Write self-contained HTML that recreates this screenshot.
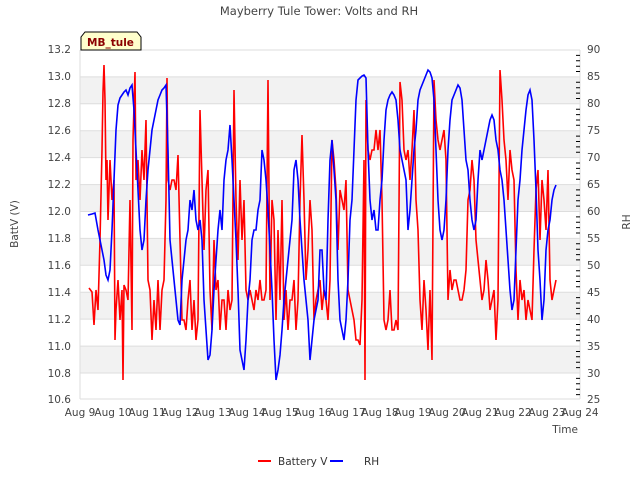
<!DOCTYPE html>
<html><head><meta charset="utf-8"><style>
body{margin:0;background:#fff;}
svg{display:block;font-family:"DejaVu Sans","Liberation Sans",sans-serif;}
</style></head><body>
<svg width="640" height="480" viewBox="0 0 640 480" xmlns="http://www.w3.org/2000/svg">
<rect width="640" height="480" fill="#fff"/>
<text x="319" y="15" text-anchor="middle" font-size="11.5" fill="#444">Mayberry Tule Tower: Volts and RH</text>
<g fill="#f2f2f2">
<rect x="80" y="76.9" width="500" height="26.9"/>
<rect x="80" y="130.7" width="500" height="26.9"/>
<rect x="80" y="184.6" width="500" height="26.9"/>
<rect x="80" y="238.4" width="500" height="26.9"/>
<rect x="80" y="292.2" width="500" height="26.9"/>
<rect x="80" y="346.1" width="500" height="26.9"/>
</g>
<g stroke="#ddd" stroke-width="1">
<line x1="80" y1="50" x2="580" y2="50"/><line x1="80" y1="76.9" x2="580" y2="76.9"/><line x1="80" y1="103.8" x2="580" y2="103.8"/><line x1="80" y1="130.7" x2="580" y2="130.7"/><line x1="80" y1="157.6" x2="580" y2="157.6"/><line x1="80" y1="184.6" x2="580" y2="184.6"/><line x1="80" y1="211.5" x2="580" y2="211.5"/><line x1="80" y1="238.4" x2="580" y2="238.4"/><line x1="80" y1="265.3" x2="580" y2="265.3"/><line x1="80" y1="292.2" x2="580" y2="292.2"/><line x1="80" y1="319.1" x2="580" y2="319.1"/><line x1="80" y1="346.1" x2="580" y2="346.1"/><line x1="80" y1="373" x2="580" y2="373"/>
<line x1="80" y1="50" x2="80" y2="399"/><line x1="580" y1="50" x2="580" y2="399"/><line x1="80" y1="399" x2="580" y2="399"/>
</g>
<g font-size="10.5" fill="#444" text-anchor="end">
<text x="71" y="53">13.2</text><text x="71" y="80">13.0</text><text x="71" y="107">12.8</text><text x="71" y="134">12.6</text><text x="71" y="161">12.4</text><text x="71" y="188">12.2</text><text x="71" y="215">12.0</text><text x="71" y="242">11.8</text><text x="71" y="269">11.6</text><text x="71" y="296">11.4</text><text x="71" y="323">11.2</text><text x="71" y="350">11.0</text><text x="71" y="377">10.8</text><text x="71" y="403">10.6</text>
</g>
<g font-size="10.5" fill="#444">
<text x="587" y="53">90</text><text x="587" y="80">85</text><text x="587" y="107">80</text><text x="587" y="134">75</text><text x="587" y="161">70</text><text x="587" y="188">65</text><text x="587" y="215">60</text><text x="587" y="242">55</text><text x="587" y="269">50</text><text x="587" y="296">45</text><text x="587" y="323">40</text><text x="587" y="350">35</text><text x="587" y="377">30</text><text x="587" y="403">25</text>
</g>
<g stroke="#000" stroke-width="1">
<path d="M576 55.4h4M576 60.8h4M576 66.2h4M576 71.5h4M576 82.3h4M576 87.7h4M576 93.1h4M576 98.5h4M576 109.2h4M576 114.6h4M576 120h4M576 125.3h4M576 136.1h4M576 141.5h4M576 146.9h4M576 152.2h4M576 163h4M576 168.4h4M576 173.8h4M576 179.2h4M576 189.9h4M576 195.3h4M576 200.7h4M576 206.1h4M576 216.9h4M576 222.3h4M576 227.6h4M576 233h4M576 243.8h4M576 249.2h4M576 254.6h4M576 259.9h4M576 270.7h4M576 276.1h4M576 281.5h4M576 286.8h4M576 297.6h4M576 303h4M576 308.4h4M576 313.8h4M576 324.5h4M576 329.9h4M576 335.3h4M576 340.7h4M576 351.5h4M576 356.8h4M576 362.2h4M576 367.6h4M576 378.4h4M576 383.8h4M576 389.2h4M576 394.6h4"/>
</g>
<g font-size="10.5" fill="#444" text-anchor="middle">
<text x="80" y="416">Aug 9</text><text x="113" y="416">Aug 10</text><text x="147" y="416">Aug 11</text><text x="180" y="416">Aug 12</text><text x="213" y="416">Aug 13</text><text x="247" y="416">Aug 14</text><text x="280" y="416">Aug 15</text><text x="313" y="416">Aug 16</text><text x="347" y="416">Aug 17</text><text x="380" y="416">Aug 18</text><text x="413" y="416">Aug 19</text><text x="447" y="416">Aug 20</text><text x="480" y="416">Aug 21</text><text x="513" y="416">Aug 22</text><text x="547" y="416">Aug 23</text><text x="580" y="416">Aug 24</text>
</g>
<text x="578" y="433" font-size="10.5" fill="#444" text-anchor="end">Time</text>
<text transform="translate(18,224) rotate(-90)" font-size="10.5" fill="#444" text-anchor="middle">BattV (V)</text>
<text transform="translate(630,222) rotate(-90)" font-size="10.5" fill="#444" text-anchor="middle">RH</text>
<polyline fill="none" stroke="#ff0000" stroke-width="1.6" points="89,288 92,292 94,325 96,290 98,310 100,240 102,150 103,92 104,65 105,100 106,180 107,160 108,220 110,160 112,200 114,180 115,340 116,310 118,280 120,320 122,290 123,380 124,285 126,290 128,300 130,200 132,330 133,140 135,72 136,180 138,160 140,200 142,150 144,180 146,120 148,280 150,290 152,340 154,300 156,330 158,280 160,330 162,290 164,280 166,200 167,78 168,180 170,190 172,180 174,180 176,190 178,155 180,240 182,320 184,320 186,330 188,300 190,280 192,330 194,300 196,340 198,320 200,110 202,180 204,250 206,190 208,170 210,290 212,330 214,240 216,290 218,280 220,330 222,300 224,300 226,330 228,290 230,310 232,300 234,90 236,200 238,260 240,180 242,240 244,200 246,290 248,300 250,290 252,300 254,310 256,290 258,300 260,280 262,300 264,300 266,290 268,80 270,300 272,200 274,220 276,320 278,230 280,300 282,200 284,320 286,290 288,330 290,300 292,300 294,280 296,330 298,300 300,200 302,135 304,200 306,280 308,250 310,200 312,230 314,320 316,300 318,290 320,280 322,310 324,290 326,300 328,320 330,280 332,140 334,160 336,190 338,250 340,190 342,200 344,210 346,180 348,290 350,300 352,310 354,320 356,340 358,340 360,345 362,300 364,160 365,380 366,100 368,150 370,160 372,150 374,150 376,130 378,150 380,130 382,200 384,320 386,330 388,320 390,290 392,330 394,330 396,320 398,330 400,82 402,100 404,150 406,160 408,150 410,180 412,150 414,110 416,200 418,230 420,300 422,330 424,280 426,310 428,350 430,290 432,360 434,80 436,120 438,140 440,150 442,140 444,130 446,160 448,300 450,270 452,290 454,280 456,280 458,290 460,300 462,300 464,290 466,270 468,200 470,190 472,160 474,180 476,240 478,260 480,280 482,300 484,290 486,260 488,280 490,310 492,300 494,290 496,340 498,300 500,70 502,100 504,140 506,160 508,200 510,150 512,170 514,180 516,270 518,320 520,280 522,300 524,290 526,320 528,300 530,310 532,320 534,250 536,190 538,170 540,240 542,180 544,200 546,230 548,170 550,280 552,300 554,290 556,280"/>
<polyline fill="none" stroke="#0000ff" stroke-width="1.6" points="88,215 92,214 95,213 98,230 100,240 102,250 104,260 106,275 108,280 110,270 112,230 114,180 116,130 118,105 120,98 122,95 124,92 126,90 128,95 130,88 132,85 134,110 136,150 138,190 140,230 142,250 144,240 146,200 148,170 150,150 152,130 154,120 156,110 158,100 160,95 162,90 164,88 166,85 168,150 170,240 172,260 174,280 176,300 178,320 180,325 182,280 184,260 186,240 188,230 190,200 192,210 194,190 196,220 198,230 200,220 202,240 204,300 206,330 208,360 210,355 212,330 214,290 216,260 218,230 220,210 222,230 224,180 226,160 228,150 230,125 232,160 234,200 236,240 238,290 240,350 242,360 244,370 246,340 248,300 250,280 252,240 254,230 256,230 258,210 260,200 262,150 264,160 266,180 268,210 270,250 272,290 274,340 276,380 278,370 280,355 282,330 284,300 286,280 288,260 290,240 292,220 294,170 296,160 298,180 300,220 302,250 304,280 306,300 308,320 310,360 312,340 314,320 316,310 318,300 320,250 322,250 324,290 326,300 328,220 330,160 332,140 334,170 336,200 338,280 340,320 342,330 344,340 346,320 348,280 350,220 352,200 354,150 356,100 358,80 360,78 362,76 364,75 366,78 368,150 370,200 372,220 374,210 376,230 378,230 380,200 382,180 384,140 386,110 388,100 390,95 392,92 394,95 396,100 398,120 400,150 402,160 404,170 406,180 408,230 410,210 412,180 414,150 416,130 418,100 420,90 422,85 424,80 426,75 428,70 430,72 432,78 434,100 436,150 438,200 440,230 442,240 444,230 446,200 448,150 450,120 452,100 454,95 456,90 458,85 460,88 462,100 464,130 466,160 468,170 470,200 472,220 474,230 476,220 478,180 480,150 482,160 484,150 486,140 488,130 490,120 492,115 494,120 496,140 498,150 500,170 502,180 504,200 506,230 508,260 510,290 512,310 514,300 516,250 518,200 520,180 522,150 524,130 526,110 528,95 530,90 532,100 534,140 536,190 538,250 540,280 542,320 544,300 546,250 548,230 550,220 552,200 554,190 556,185"/>
<path d="M81 50 V37 L85 32 H137 L141 37 V50 Z" fill="#ffffcc" stroke="#000" stroke-width="1"/>
<text x="87" y="46" font-size="10.5" font-weight="bold" fill="#8b0000">MB_tule</text>
<line x1="258" y1="461" x2="271" y2="461" stroke="#ff0000" stroke-width="2"/>
<text x="278" y="465" font-size="10.5" fill="#333">Battery V</text>
<line x1="330" y1="461" x2="343" y2="461" stroke="#0000ff" stroke-width="2"/>
<text x="364" y="465" font-size="10.5" fill="#333">RH</text>
</svg>
</body></html>
